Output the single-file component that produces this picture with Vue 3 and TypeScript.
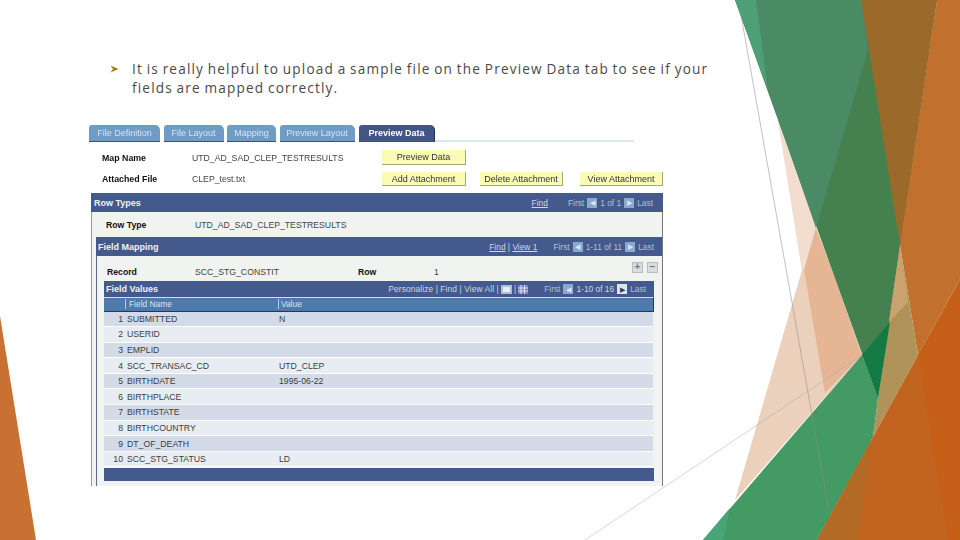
<script setup lang="ts">
interface FieldRow { n: number; name: string; value: string }
const rows: FieldRow[] = [
  { n: 1, name: 'SUBMITTED', value: 'N' },
  { n: 2, name: 'USERID', value: '' },
  { n: 3, name: 'EMPLID', value: '' },
  { n: 4, name: 'SCC_TRANSAC_CD', value: 'UTD_CLEP' },
  { n: 5, name: 'BIRTHDATE', value: '1995-06-22' },
  { n: 6, name: 'BIRTHPLACE', value: '' },
  { n: 7, name: 'BIRTHSTATE', value: '' },
  { n: 8, name: 'BIRTHCOUNTRY', value: '' },
  { n: 9, name: 'DT_OF_DEATH', value: '' },
  { n: 10, name: 'SCC_STG_STATUS', value: 'LD' },
]
const tabs = [
  { label: 'File Definition', w: 71 },
  { label: 'File Layout', w: 60 },
  { label: 'Mapping', w: 49 },
  { label: 'Preview Layout', w: 75 },
]
</script>

<template>
  <div class="slide">
    <svg class="art" width="960" height="540" viewBox="0 0 960 540">
      <polygon points="0,316 36,540 0,540" fill="#c87132" />
      <polygon points="778,120 816,228 862,355 735,500 802,270" fill="#ebd1bc" />
      <polygon points="778,120 816,228 804,270 802,270" fill="#f2ddce" />
      <polygon points="816,228 832,270 862,355 825,393 804,270" fill="#e6b594" />
      <polygon points="735,0 937,0 878,398" fill="#44814f" />
      <polygon points="755,0 862,0 868,50 816,228 768,90" fill="#4a8b66" />
      <polygon points="735,0 756,0 768,90" fill="#4d9f76" />
      <polygon points="861,0 937,0 900,245" fill="#9b6a2a" />
      <polygon points="937,0 960,0 960,279 918,355 900,245" fill="#c1702d" />
      <polygon points="900,245 918,355 873,437 878,398" fill="#b09358" />
      <polygon points="900,245 908,302 889,322" fill="#c9a26f" />
      <polygon points="703,540 862,355 878,398 873,437 817,540" fill="#439a62" />
      <polygon points="703,540 723,540 730,508" fill="#47a576" />
      <polygon points="862,355 890,322 878,398" fill="#147a43" />
      <polygon points="817,540 873,437 918,355 960,279 960,540" fill="#c0641f" />
      <polygon points="918,355 960,283 960,540 948,540" fill="#c55f18" />
      <polygon points="817,540 857,540 871,440" fill="#b26a24" />
      <line x1="741" y1="15" x2="829" y2="511" stroke="#8f8f8f" stroke-opacity="0.7" stroke-width="0.8" />
      <line x1="585" y1="540" x2="862" y2="355" stroke="#a8a8a8" stroke-opacity="0.6" stroke-width="0.8" />
    </svg>

    <div class="bullet">
      <svg class="arrow" width="9" height="8" viewBox="0 0 9 8">
        <path d="M0.5 0.5 L8.500 4 L0.5 7.5 L3 4 Z" fill="#a57a18" />
      </svg>
      <p class="lead">It is really helpful to upload a sample file on the Preview Data tab to see if your fields are mapped correctly.</p>
    </div>

    <div class="shot">
      <div class="tabs">
        <div v-for="t in tabs" :key="t.label" class="tab" :style="{ width: t.w + 'px' }">{{ t.label }}</div>
        <div class="tab active">Preview Data</div>
        <div class="tabline"></div>
      </div>

      <div class="meta">
        <div class="meta-row first">
          <b class="m-label">Map Name</b>
          <span class="m-value">UTD_AD_SAD_CLEP_TESTRESULTS</span>
          <span class="btn b1">Preview Data</span>
        </div>
        <div class="meta-row">
          <b class="m-label">Attached File</b>
          <span class="m-value">CLEP_test.txt</span>
          <span class="btn b1">Add Attachment</span>
          <span class="btn b2">Delete Attachment</span>
          <span class="btn b3">View Attachment</span>
        </div>
      </div>

      <div class="band rt">
        <b>Row Types</b>
        <div class="nav">
          <u>Find</u>
          <span class="pager"><i>First</i><em class="sq">◀</em><i>1 of 1</i><em class="sq">▶</em><i>Last</i></span>
        </div>
      </div>
      <div class="lvl1">
        <div class="rt-row">
          <b class="rt-label">Row Type</b>
          <span>UTD_AD_SAD_CLEP_TESTRESULTS</span>
        </div>
        <div class="band fm">
          <b>Field Mapping</b>
          <div class="nav">
            <span><u>Find</u> | <u>View 1</u></span>
            <span class="pager"><i>First</i><em class="sq">◀</em><i>1-11 of 11</i><em class="sq">▶</em><i>Last</i></span>
          </div>
        </div>
        <div class="lvl2">
          <div class="rec">
            <b class="rec-label">Record</b>
            <span class="rec-val">SCC_STG_CONSTIT</span>
            <b class="rec-row">Row</b>
            <span class="rec-num">1</span>
            <span class="plus">+</span>
            <span class="plus minus">−</span>
          </div>
          <div class="grid">
            <div class="band fv">
              <b>Field Values</b>
              <div class="nav">
                <span class="pz">Personalize | Find | View All |
                  <svg width="11" height="9" viewBox="0 0 11 9"><rect width="11" height="9" fill="#aebfd8" /><path d="M2 2h7v5H2z" fill="#e8eef6" /></svg>
                  |
                  <svg width="10" height="9" viewBox="0 0 10 9"><rect width="10" height="9" fill="#7f7fc4" /><path d="M0 3h10M0 6h10M3 0v9M6.500 0v9" stroke="#dfe6f2" /></svg>
                </span>
                <span class="pager"><i>First</i><em class="sq">◀</em><i class="hi">1-10 of 16</i><em class="sq on">▶</em><i>Last</i></span>
              </div>
            </div>
            <div class="thead">
              <span class="c0"></span>
              <span class="c1">Field Name</span>
              <span class="c2">Value</span>
            </div>
            <div v-for="r in rows" :key="r.n" class="tr" :class="{ odd: r.n % 2 === 1 }">
              <span class="c0 num">{{ r.n }}</span>
              <span class="c1">{{ r.name }}</span>
              <span class="c2">{{ r.value }}</span>
            </div>
            <div class="foot"></div>
          </div>
        </div>
      </div>
    </div>
  </div>
</template>

<style>
html, body { margin: 0; background: #fff; }
</style>

<style scoped>
.slide {
  position: relative;
  width: 960px;
  height: 540px;
  overflow: hidden;
  background: #fff;
  font-family: "Liberation Sans", Arial, sans-serif;
}
.art { position: absolute; left: 0; top: 0; }

.bullet {
  position: relative;
  display: flex;
  align-items: flex-start;
  padding: 59px 0 0 110px;
  height: 65px;
  box-sizing: content-box;
}
.arrow { margin-top: 6px; flex: none; }
.lead {
  margin: 0 0 0 13px;
  width: 590px;
  font-family: "Open Sans", sans-serif;
  font-size: 13.6px;
  line-height: 19px;
  letter-spacing: 1.17px;
  word-spacing: -1px;
  color: #4a4a4a;
  font-weight: 400;
}

.shot {
  position: relative;
  margin: 1px 0 0 89px;
  width: 574px;
  height: 361px;
  font-size: 8.7px;
  color: #333;
  filter: blur(0.4px);
}

.tabs { display: flex; gap: 3.5px; height: 17px; position: relative; }
.tab {
  box-sizing: border-box;
  height: 17px;
  padding-top: 3px;
  background: #6f9cc6;
  color: #d7e4f1;
  border-radius: 3px 5px 0 0;
  border-bottom: 1px solid #3f4f75;
  text-align: center;
  font-size: 9px;
}
.tab.active {
  width: 76px;
  margin-left: 1px;
  background: #435584;
  color: #fff;
  font-weight: 700;
  border-right: 1px solid #26314f;
}
.tabline {
  align-self: flex-end;
  width: 199px;
  height: 2px;
  margin-left: -3.5px;
  background: #dce5ee;
}

.meta { height: 51px; padding-top: 8px; box-sizing: border-box; }
.meta-row { display: flex; align-items: center; position: relative; color: #444; }
.meta-row.first { height: 15px; margin-bottom: 7px; }
.meta-row:not(.first) { height: 14px; }
.m-label { width: 90px; margin-left: 13px; color: #111; font-size: 8.8px; }
.m-value { width: 190px; }
.btn {
  box-sizing: border-box;
  height: 100%;
  width: 84px;
  display: flex;
  align-items: center;
  justify-content: center;
  background: #fbfbb8;
  border-right: 1px solid #a5a57c;
  border-bottom: 1px solid #a5a57c;
  color: #333;
  font-size: 9px;
}
.b2 { margin-left: 14px; width: 83px; }
.b3 { margin-left: 17px; width: 83px; }

.band {
  display: flex;
  justify-content: space-between;
  align-items: center;
  background: #455a8c;
  color: #fff;
  box-sizing: border-box;
}
.band b { font-size: 9px; color: #eef1f7; }
.nav { display: flex; align-items: center; color: #cfd7e6; font-size: 8.4px; }
.pager { display: flex; align-items: center; gap: 3px; margin-left: 16px; }
.rt .pager { margin-left: 20px; }
.pager i { font-style: normal; opacity: 0.8; }
.pager i.hi { opacity: 1; }
.sq {
  width: 10px;
  height: 10px;
  display: flex;
  align-items: center;
  justify-content: center;
  font-style: normal;
  font-size: 7px;
  line-height: 1;
  background: #8ba9cf;
  color: #dde6f2;
}
.sq.on { background: #dce4f0; color: #2a3a60; }
.rt { margin-left: 2px; height: 19px; padding: 0 10px 0 3px; }
.fm { height: 19px; padding: 0 8px 0 2px; }
.fv { height: 16px; padding: 0 8px 0 2px; }
.pz { display: inline-flex; align-items: center; gap: 2px; letter-spacing: 0.1px; }

.lvl1 {
  height: 274px;
  margin-left: 2px;
  background: #f1f3f0;
  border-left: 1px solid #9a9a9a;
  box-sizing: border-box;
  padding-left: 4px;
  border-right: 1px solid #777;
}
.rt-row { display: flex; align-items: center; height: 25px; color: #444; }
.rt-label { width: 89px; margin-left: 10px; color: #111; }
.lvl2 {
  height: 230px;
  border-left: 1px solid #5a6a8a;
  box-sizing: border-box;
  padding-left: 7px;
}
.rec {
  display: flex;
  align-items: center;
  height: 25px;
  padding-top: 6px;
  box-sizing: border-box;
  color: #444;
}
.rec-label { width: 88px; margin-left: 3px; color: #111; }
.rec-val { width: 163px; }
.rec-row { width: 76px; color: #111; }
.rec-num { width: 196px; flex: none; }
.plus {
  width: 11px;
  height: 11px;
  flex: none;
  box-sizing: border-box;
  margin-left: 2px;
  margin-top: -8px;
  background: #d9dde0;
  border: 1px solid #b9bdc0;
  color: #6c7a88;
  font-size: 10px;
  font-weight: 700;
  line-height: 8px;
  text-align: center;
}
.plus.minus { margin-left: 4px; }
.grid { width: 550px; }
.thead {
  display: flex;
  height: 14.5px;
  align-items: center;
  background: #4e7aae;
  color: #dbe5f1;
  border-top: 1px solid #cfdcec;
  border-bottom: 1px solid #24385f;
  border-right: 1px solid #24385f;
  box-sizing: border-box;
  font-size: 8.4px;
}
.c0 { width: 21px; flex: none; box-sizing: border-box; }
.c1 { width: 153px; flex: none; padding-left: 2px; box-sizing: border-box; }
.c2 { flex: 1; padding-left: 1px; }
.thead .c1 { border-left: 1px solid #b7cbe2; padding-left: 3px; }
.thead .c2 { border-left: 1px solid #b7cbe2; padding-left: 2px; }
.tr {
  display: flex;
  align-items: center;
  height: 15.6px;
  box-sizing: border-box;
  background: #e8edf3;
  border-bottom: 1px solid #fff;
  margin-right: 1px;
  color: #3d3d3d;
  font-size: 8.7px;
}
.tr.odd { background: #d3dbe8; }
.num { text-align: right; padding-right: 2px; }
.foot { height: 13.5px; margin-top: 0.5px; background: #455a8c; }
</style>
